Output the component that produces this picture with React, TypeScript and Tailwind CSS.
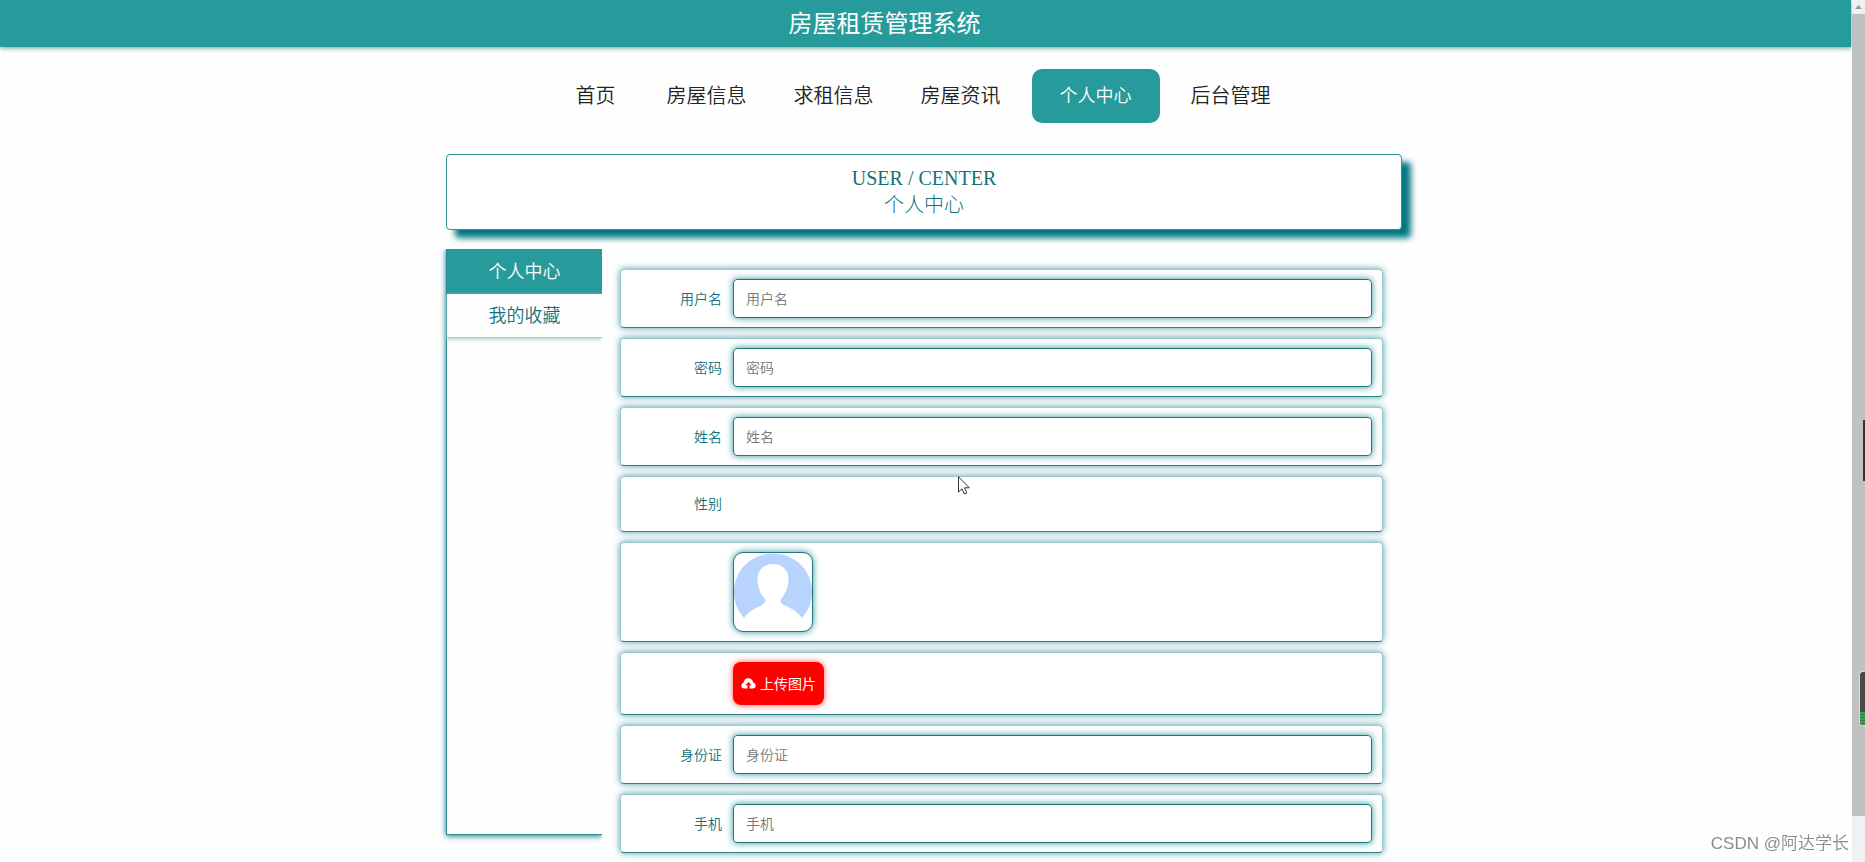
const navItems = ["首页", "房屋信息", "求租信息", "房屋资讯", "个人中心", "后台管理"]

const Navbar = () => {
    return (
        <nav className="flex h-[54px] items-stretch justify-center gap-[15px] pr-[6px]">
            {navItems.map((item) => {
                const active = item === "个人中心"
                return (
                    <a
                        href="#"
                        key={item}
                        className={
                            active
                                ? "flex items-center justify-center rounded-[10px] bg-[#279b9b] px-7 text-lg font-[350] text-white"
                                : "flex min-w-20 items-center justify-center px-4 text-xl font-[350] text-[#222]"
                        }
                    >
                        {item}
                    </a>
                )
            })}
        </nav>
    )
}

const Sidebar = () => {
    return (
        <aside className="-ml-2 w-[164px] shrink-0 overflow-hidden pb-2 pl-2">
            <div className="h-[586px] border-b border-l border-[#2f8d94] shadow-[0_1px_6px_#007780]">
                <a href="#" className="flex h-[45px] items-center justify-center bg-[#279b9b] text-lg font-[350] text-white">
                    个人中心
                </a>
                <a href="#" className="flex h-11 items-center justify-center border-b border-[#a5cdd1] text-lg font-[350] text-[#15707c] shadow-[0_1px_4px_#9cc9ce]">
                    我的收藏
                </a>
            </div>
        </aside>
    )
}

const Row = ({ children }: { children: any }) => {
    return (
        <div className="flex rounded border border-[#9cc9ce] border-b-[#2f8088] bg-white px-[10px] py-[9px] shadow-[0_0_7px_#4b9fa7]">
            {children}
        </div>
    )
}

const labelStyle = "flex w-[102px] shrink-0 items-center justify-end pr-[11px] text-sm font-[350] text-[#15707c]"

const Field = ({ id, label, type = "text" }: { id: string, label: string, type?: string }) => {
    return (
        <Row>
            <label htmlFor={id} className={labelStyle}>{label}</label>
            <input
                id={id}
                type={type}
                placeholder={label}
                className="h-[39px] min-w-0 flex-1 rounded border border-[#1f7780] px-3 text-sm font-[350] shadow-[0_0_7px_#2b929b] outline-none placeholder:text-[#777]"
            />
        </Row>
    )
}

const Avatar = () => {
    return (
        <div className="h-20 w-20 overflow-hidden rounded-[10px] border border-[#1f7780] bg-white shadow-[0_0_7px_#2b929b]">
            <svg viewBox="0 0 78 78" className="h-full w-full">
                <path d="M39 0.5A38.5 38.5 0 0 0 10 65C15 58 22 55 28 52C31 50 32 48 31 46C26 40 23.500 34 23.500 26C23.500 17 30 11 39 11C48 11 54.500 17 54.500 26C54.500 34 51 41 47 46C46 49 47 51 50 52C56 55 63 58 68 65A38.500 38.500 0 0 0 39 0.500Z" fill="#b9d3ff" />
            </svg>
        </div>
    )
}

const CloudIcon = () => {
    return (
        <svg viewBox="0 0 15 11" className="h-[11px] w-[15px]" fill="#fff">
            <path d="M6.500 10.500H3.300A3 3 0 0 1 0.300 7.600C0.300 6.200 1.200 5.100 2.500 4.700C2.700 2.200 4.700 0.300 7.300 0.300C9.800 0.300 11.900 2.100 12.200 4.600C13.700 4.900 14.700 6.100 14.700 7.600A3 3 0 0 1 11.700 10.500H8.500V7.300H10.500L7.500 3.900L4.500 7.300H6.500Z" />
        </svg>
    )
}

const UserForm = () => {
    return (
        <form className="mt-5 flex flex-1 flex-col gap-[10px]">
            <Field id="username" label="用户名" />
            <Field id="password" label="密码" type="password" />
            <Field id="name" label="姓名" />
            <Row>
                <span className={labelStyle}>性别</span>
                <div className="h-9"></div>
            </Row>
            <Row>
                <span className={labelStyle}></span>
                <Avatar />
            </Row>
            <Row>
                <span className={labelStyle}></span>
                <button type="button" className="flex h-[43px] items-center gap-1 rounded-lg bg-[#ff0000] px-2 text-sm text-white shadow-[0_0_6px_#ff5555]">
                    <CloudIcon />
                    上传图片
                </button>
            </Row>
            <Field id="idcard" label="身份证" />
            <Field id="phone" label="手机" />
        </form>
    )
}

const Scrollbar = () => {
    return (
        <div className="fixed inset-y-0 right-0 flex w-[13px] flex-col bg-[#f1f1f4]">
            <svg viewBox="0 0 13 14" className="h-[14px] w-[13px]">
                <path d="M3 9L6.500 5L10 9Z" fill="#999" />
            </svg>
            <div className="h-[93%] bg-[#c1c1c1]"></div>
            <div className="absolute right-0 top-[420px] h-[61px] w-[2px] bg-[#333]"></div>
            <div className="absolute right-0 top-[671px] h-[55px] w-[6px] overflow-hidden rounded-l border-y border-l border-[#ddd] bg-[#4a4a4a]">
                <div className="mt-10 h-[14px] bg-[repeating-linear-gradient(#2fa84f_0_2px,#4a6b50_2px_3px)]"></div>
            </div>
        </div>
    )
}

const App = () => {
    return (
        <div className="min-h-screen bg-[#fefefe] pr-[14px] font-['Liberation_Sans','Noto_Sans_CJK_SC',sans-serif]">
            <header className="flex h-[47px] items-center justify-center bg-[#279b9b] pr-[82px] shadow-[0_1px_5px_#5a9c9c]">
                <h1 className="text-2xl leading-none text-white">房屋租赁管理系统</h1>
            </header>
            <div className="pr-[3px] pt-[22px]">
                <Navbar />
                <main className="mx-auto mt-[31px] w-full max-w-[956px]">
                    <section className="rounded border border-[#2f9297] bg-white py-[10px] text-center text-xl leading-[27px] text-[#15707c] shadow-[9px_8px_6px_#007780]">
                        <p className="font-['Liberation_Serif',serif]">USER / CENTER</p>
                        <h2 className="font-light">个人中心</h2>
                    </section>
                    <div className="mt-[19px] flex items-start gap-[18px] pr-[19px]">
                        <Sidebar />
                        <UserForm />
                    </div>
                </main>
            </div>

            <svg viewBox="0 0 12 19" className="absolute left-[958px] top-[476px] h-[19px] w-3">
                <path d="M0.500 0.800V16L4 12.800L6.300 18L8.800 17L6.500 11.800H11.300Z" fill="#fff" stroke="#333" />
            </svg>
            <p className="fixed bottom-[6px] right-4 text-[17px] font-[350] text-[#8c8c8c]">CSDN @阿达学长</p>
            <Scrollbar />
        </div>
    )
}

export default App
